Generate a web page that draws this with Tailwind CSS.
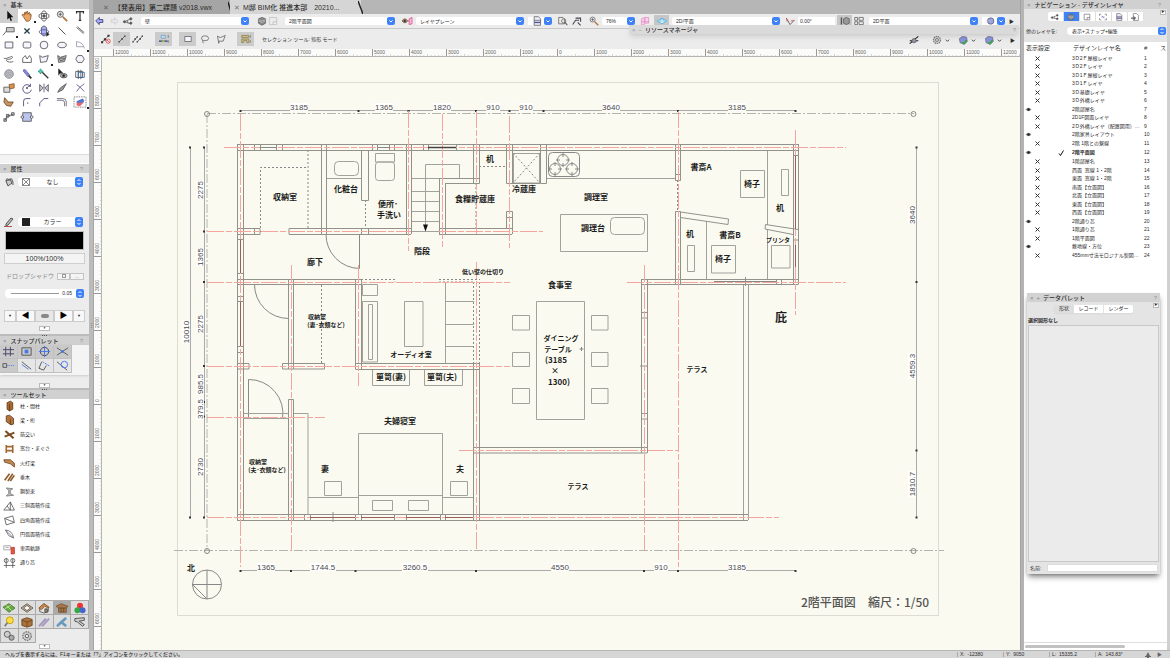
<!DOCTYPE html>
<html lang="ja">
<head>
<meta charset="utf-8">
<title>M邸 BIM化 推進本部</title>
<script src="https://cdn.jsdelivr.net/npm/@tailwindcss/browser@4"></script>
</head>
<body class="h-screen overflow-hidden flex flex-col bg-[#bdbdbd] text-[#2c2c2c] text-[5px] leading-none font-['Liberation_Sans','Noto_Sans_CJK_JP',sans-serif]">
<div class="flex-1 min-h-0 flex">

  <!-- left palettes -->
  <aside class="w-[89px] shrink-0 flex flex-col bg-[#ececec]">
    <section class="h-[164px] shrink-0 flex flex-col bg-white">
      <header data-title="基本"></header>
      <div id="tools" class="grid grid-cols-5"></div>
      <div class="mt-auto mb-px h-[9px] bg-[#f4f4f4] border-t border-[#dcdcdc]"></div>
    </section>
    <section class="h-[170px] shrink-0 flex flex-col">
      <header data-title="属性" data-help="1"></header>
      <div class="flex items-center h-[18px] pl-1 pr-[6px] gap-1">
        <svg class="w-[10px] h-[10px]" viewBox="0 0 10 10" fill="none" stroke="#555"><path d="M2 4l4-2 2 4-4 3zM6 2c2-1 3 1 3 6M2 4c0-3 3-3 3 0" fill="#ccc"/></svg>
        <label class="flex-1 flex items-center h-[10px] bg-white rounded-sm shadow-xs"><svg class="w-[8px] h-[8px] ml-1" viewBox="0 0 8 8" fill="none" stroke="#555" stroke-width=".7"><path d="M.5.5h7v7h-7zM.5.5l7 7M7.500.5l-7 7"/></svg><select aria-label="塗り" class="appearance-none flex-1 min-w-0 text-center text-[6px]"><option>なし</option></select><span data-stepper></span></label>
      </div>
      <div class="flex items-center h-[18px] pl-1 pr-[6px] gap-1 mt-[22px]">
        <svg class="w-[10px] h-[10px]" viewBox="0 0 10 10" fill="none" stroke="#555"><path d="M2 7l5-6 2 1-5 6-2 1z" fill="#bbb"/><path d="M0 9.500h8" stroke="#a55"/></svg>
        <label class="flex-1 flex items-center h-[10px] bg-white rounded-sm shadow-xs"><span class="w-[8px] h-[8px] ml-1 bg-[#222]"></span><select aria-label="ペン" class="appearance-none flex-1 min-w-0 text-center text-[6px]"><option>カラー</option></select><span data-stepper></span></label>
      </div>
      <button aria-label="線の色" class="mx-[5px] h-[19px] bg-black border border-[#bbb]"></button>
      <button class="mx-1 mt-[3px] h-[11px] bg-[#f4f4f4] border border-[#cfcfcf] text-[7px] leading-none">100%/100%</button>
      <div class="flex items-center h-[10px] mt-[7px] pl-[6px] pr-[5px] text-[#888] text-[6px]">
        <span class="flex-1 whitespace-nowrap">ドロップシャドウ</span>
        <button class="w-[13px] h-[7px] border border-[#c4c4c4] bg-[#f4f4f4] flex items-center justify-center"><span class="w-1 h-1 border border-[#999]"></span></button>
        <button class="w-[14px] h-[7px] border border-[#c4c4c4] bg-[#f4f4f4] text-[5px] leading-none">...</button>
      </div>
      <div class="flex items-center h-[9px] mx-[5px] mt-2 bg-white rounded-sm"><span class="h-px bg-[#999] flex-1 ml-[6px] mr-[3px]"></span><span class="pr-1 text-[5px]">0.05</span><span data-stepper></span></div>
      <div class="flex mx-1 mt-[12px] h-[12px]">
        <button class="w-[12px] border border-[#ccc] bg-[#f8f8f8] text-[4px]">▼</button>
        <button class="flex-1 border border-[#ccc] bg-[#f8f8f8] text-[8px] leading-none text-black">◀</button>
        <button aria-label="線種" class="flex-1 border border-[#ccc] bg-[#e8e8e8] flex items-center justify-center"><span class="w-[8px] h-1 rounded-xs bg-[#888]"></span></button>
        <button class="flex-1 border border-[#ccc] bg-[#f8f8f8] text-[8px] leading-none text-black">▶</button>
        <button class="w-[12px] border border-[#ccc] bg-[#f8f8f8] text-[4px]">▼</button>
      </div>
      <div data-fold class="mt-1"></div>
    </section>
    <div data-grip></div>
    <section class="h-[52px] shrink-0 flex flex-col">
      <header data-title="スナップパレット" data-help="1"></header>
      <div id="snaps" class="grid grid-cols-[repeat(4,18px)] pb-[2px] bg-[#f4f4f4] shadow-sm"></div>
      <div data-fold class="mt-auto"></div>
    </section>
    <div data-grip></div>
    <section class="flex-1 min-h-0 flex flex-col">
      <header data-title="ツールセット"></header>
      <div class="flex-1 bg-white"><div id="toolset" class="h-[171px] flex flex-col"></div></div>
      <div id="cats" class="grid grid-cols-5 border-t border-l border-[#aaa]"></div>
      <div data-fold class="h-[7px]"></div>
    </section>
  </aside>
  <div class="w-[5px] shrink-0 bg-[#bbb] border-r border-[#a6a6a6] flex items-center justify-center text-[#555] text-[5px]">⋮</div>

  <!-- document area -->
  <main class="relative flex-1 min-w-0 flex flex-col bg-[#ececec]">
    <nav class="h-[14px] shrink-0 flex bg-[#b6b6b6] text-[7px] font-medium" aria-label="書類">
      <button class="w-[136px] bg-[#a5a5a5] flex items-center gap-[5px] pl-[9px] whitespace-nowrap"><span class="text-[#666]">✕</span>【発表用】第二課題 v2018.vwx</button>
      <svg class="w-1 h-[14px] -mx-[2px]" viewBox="0 0 4 14"><path d="M0 2L3 12" stroke="#222" stroke-width="1.500"/></svg>
      <button class="w-[131px] bg-[#d5d5d5] flex items-center gap-[3px] pl-1 whitespace-nowrap"><span class="text-[#777]">✕</span>M邸 BIM化 推進本部　20210...</button>
      <svg class="w-[5px] h-[14px] -mx-[3px]" viewBox="0 0 5 14"><path d="M0 1L5 14" stroke="#222" stroke-width="1.500"/></svg>
    </nav>
    <div id="bar1" class="h-[15px] shrink-0 flex items-center bg-[#ececec] border-b border-[#c8c8c8]"></div>
    <div id="bar2" class="h-[20px] shrink-0 flex items-center bg-[#ececec]"></div>
    <div class="h-[8px] shrink-0 bg-[#fbfbf9] border-b border-[#b5b5b5] overflow-hidden"><svg id="hruler" class="w-full h-[8px]"></svg></div>
    <div class="flex-1 min-h-0 flex">
      <div class="w-[8px] shrink-0 bg-[#fbfbf9] border-r border-[#b5b5b5] overflow-hidden"><svg id="vruler" class="w-[8px] h-full"></svg></div>
      <div class="flex-1 min-w-0 bg-[#fafaf0] overflow-hidden">
      <svg class="w-full h-full" role="img" aria-label="2階平面図">
       <g transform="translate(-102 -57)">
        <rect x="177.500" y="82.500" width="761" height="533" fill="none" stroke="#dcdcd4"/>
        <g fill="none" stroke="#b4b4ae" stroke-dasharray="9 2 2 2"><path d="M207 114V551M207 113.500H914M174 550.500H944"/></g>
        <g fill="none" stroke="#888"><circle cx="207" cy="114" r="2.500"/><circle cx="207" cy="551" r="2.500"/><circle cx="913.500" cy="114" r="2.500"/><circle cx="913.500" cy="551" r="2.500"/></g>
        <!-- dimension lines -->
        <path d="M240.500 110.500H796M190.500 147V518M204.500 147V518M916.500 147V518M240 570.500H796" fill="none" stroke="#aaa"/>
        <g id="dots" fill="#333"></g>
        <g id="dims" class="text-[8px] font-['Liberation_Sans',sans-serif]" fill="#4a4a4a" text-anchor="middle"></g>
        <!-- furniture -->
        <g fill="none" stroke="#a2a29d">
         <path d="M326 178.500H361M546 178.500H676M375.500 153.500h19v8.500h-19zM513.500 153.500h26v29.500h-26zM560.500 214.500h87v37h-87zM740.500 170.500h24v27h-24zM767.500 150V225M767.500 230V279M781.500 169.500h7v26h-7zM706.500 221V279M687.500 245.500h7v26h-7zM711.500 245.500h24v27.500h-24zM771.500 245.500h18.500v22.500h-18.500z"/>
         <rect x="334.500" y="161.500" width="24" height="14" rx="4"/><rect x="375.500" y="162" width="19" height="18.500" rx="3"/><rect x="610.500" y="217.500" width="34" height="17" rx="4"/>
         <rect x="548.500" y="152.500" width="31" height="24" rx="4" stroke="#888"/>
         <g stroke="#888"><circle cx="563" cy="160" r="5.500"/><circle cx="555" cy="169" r="5.500"/><circle cx="572" cy="169" r="5.500"/><path d="M563 153v4M563 163v4M556 160h4M566 160h4M555 162v4M555 172v4M548 169h4M558 169h4M572 162v4M572 172v4M565 169h4M575 169h4"/></g>
         <path d="M411 178.500H440M411 191.500H440M411 201.500H440M411 211.500H440M411 221.500H440M425.500 226V164.500H459.500V178M411 231.500H440"/>
         <path d="M362.500 284.500h15v11h-15zM362.500 301.500h15v60.500h-15zM368.500 304.500h4v55h-4zM404.500 301.500h18.500v45h-18.500zM445.500 282V363M445.500 301.500H474M445.500 324.500H474M445.500 346.500H474M372.500 369V385.500H409.500V369M424.500 369V385.500H462.500V369"/>
         <path d="M358.500 433.500h84v81h-84zM358.500 495.500h84M372.500 500.500h20v10h-20zM408.500 500.500h20v10h-20zM324.500 481.500h17v14h-17zM450.500 481.500h17v14h-17zM308 497.500H358M443 497.500H474"/>
         <path d="M536.500 301.500h48v118h-48zM512.500 315.500h17v14.500h-17zM512.500 352.500h17v14h-17zM512.500 388.500h17v15h-17zM591.500 315.500h16.500v14.500h-16.500zM591.500 352.500h16.500v14h-16.500zM591.500 388.500h16.500v15h-16.500z"/>
         <path d="M326 234A34 34 0 0 0 359.500 268.500V234M254.500 284.500A34 34 0 0 0 288.500 318.500M248.500 419V379.500A34 34 0 0 1 282.500 419" stroke="#888"/>
         <path d="M243 413.500H289M293 413.500H308V514M243 418.500H289"/>
         <g stroke-dasharray="2 2" stroke="#888"><path d="M260.500 228V167.500H308M308 150V228M260 231.500H290M365.500 200V228M479 166.500H506M513 153L540 183M540 153L513 183M476 183V228M677.500 180V211M321.500 285V363M361 279.500H395V282M439 279.500H480M439 282H474M473.500 282V363M479.500 282V363"/></g>
         <path d="M743.500 285V520M748.500 285V520"/>
        </g>
        <path d="M423 224.500h5l-2.500 7z" fill="#111"/>
        <!-- walls -->
        <g fill="none" stroke="#92928d">
         <path d="M237.500 144.500H798.500M237.500 150.500H798.500M237.500 144V520M243.500 144V520M237 228.500H260V234.500H237M411 228.500H289V234.500H411M512 228.500H439.500M439 234.500H512M237 279.500H361M237 284.500H361M237 363.500H249V369H237M282.500 363.500H324.500V369H282.500zM355.500 363.500H479.500M355.500 369.500H479.500M237 514.500H748M237 520.500H748"/>
         <path d="M321.500 144V234M326.500 144V234M361.500 150V200.500H368.500V150M361.500 228V234M368.500 228V234M406.500 144V234M411.500 144V234M439.500 178.500V234M445.500 183.500V234M439 178.500H479.500V144M445 183.500H479.500V178M473.500 144V183M506.500 144V183.500H512.500V144M506.500 228V211.500H512.500V234M506.500 217.500h6M540.500 144V183.500H546.500V144M512 183.500H540"/>
         <path d="M675.500 144V180.500H680.500V144M675.500 174.500h5M675.500 284V211.500H680.500V284M793.500 144V284M798.500 144V284M641 279.500H798.500M641 284.500H798.500M641.500 279V453M647.500 279V453M473 447.500H647M473 453H647M473.500 363V520M479.500 363V520M288.500 279V369M293.500 279V369M288.500 514V399.500H293.500V520M355.500 279V369M361.500 279V369"/>
         <path d="M680.500 212L728.500 219 728 224.500 680.500 217.500M798 229.500L765.500 224.500 765 229 793 234.500M793 240h6M793 155.500h6M237 239.500h6M237 273.500h6M237 296.500h6M237 301.500h6M237 346.500h6M237 352.500h6M254.500 144v6M260.500 144v6M276.500 144v6M282.500 144v6M372.500 144v6M377.500 144v6M389.500 144v6M394.500 144v6M423.500 144v6M428.500 144v6M456.500 144v6M254.500 228v6M641 312.500h6M641 318h6M641 413.500h6M641 419h6M776.500 279v5M781.500 279v5"/>
         <path d="M310.500 514v6M304.500 514v6M355.500 514v6M361.500 514v6M394.500 514v6M406.500 514v6M440.500 514v6M445.500 514v6M288.500 514v6M293.500 514v6M333 512V522M745.500 277V286M640 366h8"/>
        </g>
        <circle cx="207" cy="584.500" r="14.500" fill="none" stroke="#888"/><path d="M192 584.500H221M207 570V599L193 585" fill="none" stroke="#888"/>
        <!-- grid axes -->
        <g fill="none" stroke="#f5a5a0" stroke-dasharray="17 2 6 2">
         <path d="M224 147.500H846M207 231.500H411M439 231.500H543M207 282.500H510M627 282.500H846M207 366.500H510M207 417.500H325M207 517.500H779M459 450.500H678"/>
         <path d="M240.500 114V567M291.500 265V551M358.500 265V386M408.500 111V251M442.500 114V248M476.500 111V234M476.500 262V551M509.500 116V248M644.500 265V551M678.500 111V567M795.500 130V315"/>
        </g>
        <path d="M240.500 240V273M240.500 302V346M795.500 156V229M795.500 245V267M310 517.500H355M361 517.500H394M406 517.500H440M445 517.500H473" stroke="#9a5d5a" fill="none"/>
        <path d="M428 147.500H456" stroke="#444" stroke-width="1.500"/><path d="M260 147.500H277M377 147.500H390M714 281.500H776M579.500 349h4M581.500 347v4" stroke="#888"/>
        <!-- room names -->
        <g id="rooms" fill="#1c1c1c" text-anchor="middle" class="font-bold font-['Noto_Sans_CJK_JP',sans-serif]"></g>
        <g fill="#555" class="text-[12px] font-medium font-['Noto_Sans_CJK_JP',sans-serif]"><text x="801" y="607">2階平面図</text><text x="868" y="607">縮尺：1/50</text></g>
       </g>
      </svg>
      </div>
    </div>
    <section class="absolute top-[25px] left-[535px] right-[1px] h-[9px] flex items-center gap-[3px] px-[3px] bg-[#dadada] shadow-md text-[6px] font-medium">
      <button class="text-[#999]">×</button><button class="text-[#999]">−</button><h2>リソースマネージャ</h2><button class="ml-auto text-[#999]">?</button>
    </section>
  </main>
  <div class="w-[4px] shrink-0 bg-[#b4b4b4] border-l border-[#a2a2a2]"></div>

  <!-- navigation palette -->
  <aside class="relative w-[146px] shrink-0 flex flex-col bg-[#e4e4e4] border-r-[3px] border-[#d0d0d0]">
    <header data-title="ナビゲーション - デザインレイヤ" data-help="1"></header>
    <div class="h-[15px] flex items-center justify-center"><div id="navtabs" class="flex h-[9px] bg-white rounded-xs overflow-hidden"></div></div>
    <label class="h-[14px] mb-1 flex items-center pl-[2px] pr-[1px] text-[5px]"><span class="w-[41px]">他のレイヤを:</span><span class="flex-1 flex h-[8px] bg-white rounded-sm"><select class="appearance-none flex-1 min-w-0 pl-[5px] text-[5px]"><option>表示+スナップ+編集</option></select><span data-stepper></span></span></label>
    <div class="flex-1 min-h-0 bg-white flex flex-col">
      <table class="w-full table-fixed h-[218px] border-collapse text-left">
        <colgroup><col class="w-[8px]"><col class="w-[20px]"><col class="w-[19px]"><col><col class="w-[16px]"><col class="w-[7px]"></colgroup>
        <thead><tr class="h-[12px] text-[6px]"><th colspan="3" class="font-normal pl-[2px] p-0">表示設定</th><th class="font-normal p-0 pl-[2px]">デザインレイヤ名</th><th class="font-normal p-0">#</th><th class="font-normal p-0">ス</th></tr></thead>
        <tbody id="layers"></tbody>
      </table>
      <div class="mt-auto h-[8px] border-t border-[#ddd] flex items-center"><div class="ml-px w-[100px] h-[3px] rounded-full bg-[#c2c2c2]"></div></div>
    </div>
    <section class="absolute left-[3px] top-[293px] w-[133px] h-[281px] flex flex-col bg-[#e4e4e4] shadow-md shadow-black/40">
      <h2 class="h-[9px] flex items-center gap-[3px] px-[3px] bg-[#d2d2d2] text-[6px] font-medium"><button class="text-[#888]">×</button><button class="text-[#888]">+</button>データパレット<button class="ml-auto text-[#999]">?</button></h2>
      <div class="h-[13px] flex items-center justify-center"><div class="flex h-[8px] rounded-xs bg-white text-[5px] shadow-xs"><button class="w-[20px] bg-[#dedede]">形状</button><button class="w-[30px] border-r border-[#e4e4e4]">レコード</button><button class="w-[29px]">レンダー</button></div></div>
      <p class="h-[10px] flex items-center pl-px font-bold">選択図形なし</p>
      <div class="flex-1 mx-px border border-[#c8c8c8] bg-[#ebebeb]"></div>
      <label class="h-[12px] flex items-center pl-[3px] pr-[2px] gap-[6px]">名前:<input class="flex-1 min-w-0 h-[8px] bg-white border border-[#ddd]"></label>
      <button class="absolute right-[1px] top-[10px] w-[6px] h-[5px] border border-[#bbb] bg-white text-[3px] leading-none">▶</button>
    </section>
    <button class="absolute right-[1px] top-[10px] w-[6px] h-[5px] border border-[#bbb] bg-white text-[3px] leading-none">▶</button>
  </aside>
</div>

<footer class="h-[8px] shrink-0 flex items-center bg-[#d6d6d6] border-t border-[#b5b5b5] pl-[5px] text-[5px] font-medium">
  <span class="flex-1">ヘルプを表示するには、F1キーまたは「?」アイコンをクリックしてください。</span>
  <output class="w-[46px] border-l border-[#aaa] pl-[2px]">X:&nbsp; -12380</output><output class="w-[46px] border-l border-[#aaa] pl-[2px]">Y:&nbsp; 9050</output><output class="w-[46px] border-l border-[#aaa] pl-[2px]">L:&nbsp; 15335.2</output><output class="w-[46px] border-l border-[#aaa] pl-[2px]">A:&nbsp; 143.83°</output>
  <span class="w-[29px] flex items-center gap-[6px] pl-1 text-[#666]"><svg class="w-[6px] h-[6px]" viewBox="0 0 6 6"><path d="M3 0L5 4H1zM0 4h6v1H0zM2 5h2v1H2z" fill="#666"/></svg>▶</span>
</footer>

<script>
const $ = id => document.getElementById(id);
document.querySelectorAll('[data-title]').forEach(h => {
  h.className = 'h-[9px] shrink-0 flex items-center gap-1 px-[3px] bg-[#d0d0d0] text-[6px] font-medium';
  h.innerHTML = `<button class="text-[#888]" aria-label="閉じる">×</button><h2>${h.dataset.title}</h2>` + (h.dataset.help ? '<button class="ml-auto mr-[3px] text-[#999]">?</button>' : '');
});
document.querySelectorAll('[data-stepper]').forEach(s => {
  s.className = 'w-[8px] h-full min-h-[8px] shrink-0 rounded-xs bg-[#3f82f7] flex items-center justify-center';
  s.innerHTML = '<svg class="w-[6px] h-[8px]" viewBox="0 0 6 8" fill="none" stroke="#fff"><path d="M1.500 3L3 1.500 4.500 3M1.500 5L3 6.500 4.500 5"/></svg>';
});
document.querySelectorAll('[data-fold]').forEach(s => {
  s.classList.add('flex', 'justify-center', 'items-center', 'shrink-0');
  s.innerHTML = '<button class="w-[11px] h-[5px] border border-[#bbb] bg-white text-[3px] leading-none flex items-center justify-center">▼</button>';
});
document.querySelectorAll('[data-grip]').forEach(s => {
  s.className = 'h-[2px] shrink-0 bg-[#bcbcbc] flex justify-center items-center gap-px';
  s.innerHTML = '<i class="w-px h-px bg-[#555]"></i><i class="w-px h-px bg-[#555]"></i><i class="w-px h-px bg-[#555]"></i>';
});

/* icon bodies, all drawn on a 16 x 14 box */
const I = {
  arrow: '<path d="M6 1v10l2.500-2 1.500 4 1.500-1-1.500-3.500H13z" fill="#111" stroke="none"/>',
  hand: '<path d="M4 8L2 6l1-1 2 1V3l1.500-.5V5L8 1.500 9 2v3l1.500-2 1 .5V6l1-1 .5 1-1 5-2 2H7z" fill="#e7a668" stroke="#8c5a2e"/>',
  orbit: '<ellipse cx="8" cy="7" rx="6" ry="3"/><ellipse cx="8" cy="7" rx="3" ry="6"/><circle cx="8" cy="7" r="1.500" fill="#555"/>',
  mag: '<circle cx="6" cy="5" r="3.500" fill="#eee"/><path d="M4 5h4M6 3v4"/><path d="M9 8l5 5" stroke="#b7773a" stroke-width="2"/>',
  text: '<path d="M4 4V2h8v2M8 2v10M6.500 12h3" stroke="#333" stroke-width="1.500"/>',
  label: '<path d="M1 12l4-5"/><path d="M5 3h9v5H5z" fill="#ccc"/>',
  x: '<path d="M5 4l6 6M11 4L5 10" stroke="#243d4c" stroke-width="1.500"/>',
  cubes: '<path d="M5 3l3-2 3 2v8l-3 2-3-2z" fill="#aab4f0"/><ellipse cx="8" cy="8" rx="5.500" ry="2.500" stroke="#55a"/><path d="M11 8v5l3-2z" fill="#111"/>',
  line: '<path d="M4 3l8 8" stroke="#333"/>',
  dline: '<path d="M4 3l8 7M5 2l8 7" stroke="#555"/>',
  rect: '<path d="M3.500 3.500h9v7h-9z" fill="#f5f5ff"/>',
  rrect: '<rect x="3.500" y="3.500" width="9" height="7" rx="2" fill="#f5f5ff"/>',
  circle: '<circle cx="8" cy="7" r="4.500" fill="#f5f5ff"/>',
  oval: '<ellipse cx="8" cy="7" rx="5" ry="3.200" fill="#f5f5ff"/>',
  arc: '<path d="M4 3q8 1 9 8M4 3v6h8" stroke="#99a"/>',
  free: '<path d="M2 6c3 2 10-4 10-1s-9 2-7 4 5 2 8 1"/>',
  pline: '<path d="M3 11V6l3-3 2 4 3-4 2 3v5z"/>',
  poly: '<path d="M3 3l3 2 7-2-2 7-7 1z" fill="#f2f2ff"/>',
  dpoly: '<path d="M3 3l3 2 7-2-2 7-7 1zM5 6l6 0-1 2-4 1z" fill="#bbb"/>',
  hex: '<path d="M5.500 3h5L13 7l-2.500 4h-5L3 7z" fill="#f5f5ff"/>',
  sphere: '<circle cx="8" cy="7" r="5" fill="#b9bbc8" stroke="#888"/><path d="M4 5h8M3 7h10M4 9h8" stroke="#999" stroke-width=".6"/>',
  dropper: '<path d="M4 2l2 0 5 6-2 2-5-6z" fill="#88d" stroke="#66a"/><path d="M10 9l3 3" stroke="#222" stroke-width="2"/>',
  wand: '<path d="M6 5l7 7" stroke="#333" stroke-width="1.500"/><path d="M4 1l1 2 2 1-2 1-1 2-1-2-2-1 2-1z" fill="#6cc" stroke="#297"/>',
  eye: '<path d="M4 1v7l2-2h3z" fill="#111"/><ellipse cx="10" cy="9" rx="4" ry="2.500" fill="#bbb"/><circle cx="10" cy="9" r="1.500" fill="#222"/>',
  group: '<path d="M3 4h8v7H3zM6 2v11M9 2v11" /><path d="M6 5h7v6H6z" stroke="#36a"/>',
  push: '<path d="M2 6h7v6H2z" fill="#ddd"/><path d="M8 3l6-1v5l-5 1z" fill="#d8944a" stroke="#8c5a2e"/>',
  rotate: '<path d="M12 5a5 5 0 1 0 1 4M12 2v3h-3" stroke="#447"/><circle cx="8" cy="7" r=".8" fill="#447"/>',
  mirror: '<path d="M3 3v8l4-4zM13 3v8L9 7zM8 2v10" fill="#ccd" stroke="#556"/>',
  knife: '<path d="M3 12l3-5 7-5-4 7z" fill="#999"/>',
  trim: '<path d="M4 11l4-5 5 5M4 3l4 3 5-4" stroke="#558"/>',
  reshape: '<path d="M3 2l4 5 6 0-3 5-5-1-3-4z" fill="#c99565" stroke="#6e4a2a"/>',
  fillet: '<path d="M4 12V6q0-3 3-3h5" stroke="#447"/><path d="M8 8h1v1"/>',
  chamfer: '<path d="M3 12V8l5-5h5" stroke="#447"/>',
  offset: '<path d="M2 3h7q4 0 4 4v5M2 5h6q3 0 3 3v4" stroke="#667"/>',
  eraser: '<path d="M1 1h14v12H1z" stroke-dasharray="1 1"/><path d="M4 8l4-2 4 2-4 4-4-1z" fill="#e66" stroke="none"/><path d="M4 6l7-3 2 2-1 3-8 0z" fill="#57c" stroke="none"/>',
  chain: '<path d="M3 11l3-5 7-2M2 9h3v3H2zM5 4h3v3H5zM11 2h3v3h-3z" fill="#ccd"/>',
  block: '<path d="M3 2h10v10H3z" fill="#bcc4f0"/><circle cx="2.500" cy="7" r="1.500" fill="#fff"/><circle cx="13.500" cy="7" r="1.500" fill="#fff"/>',
  grid: '<path d="M5 2v10M10 2v10M2 5h12M2 9.500h12" stroke="#446"/>',
  snapr: '<path d="M3 3h10v8H3z"/><path d="M6 5h4v4H6z" fill="#47e" stroke="none"/>',
  snapc: '<circle cx="8" cy="7" r="4.500" stroke="#446"/><path d="M8 1v12M2 7h12" stroke="#47e"/>',
  snapx: '<path d="M2 3l12 8M2 11l12-8"/><circle cx="8" cy="7" r="1" fill="#47e" stroke="#47e"/>',
  snapd: '<path d="M2 5h4v4H2z"/><path d="M7 7h7" stroke="#47e" stroke-dasharray="1 1"/>',
  snapl: '<path d="M3 3l10 8"/><path d="M3 6l7 5" stroke="#47e"/>',
  snapa: '<path d="M5 3l-3 7 5 2 3-5"/><path d="M6 3l8 5" stroke="#47e" stroke-dasharray="2 1"/>',
  snapt: '<path d="M2 3l11 9"/><circle cx="10" cy="6" r="3.500" stroke="#47e"/>',
  post: '<path d="M5 3l4-2 3 2v8l-4 2-3-2z" fill="#a5682f" stroke="#5f3a18"/><path d="M8 5v8" stroke="#5f3a18"/>',
  beam: '<path d="M4 2l4-1 5 4v7l-3 1-6-4z" fill="#b3753c" stroke="#5f3a18"/><path d="M9 6v7" stroke="#5f3a18"/>',
  brace: '<path d="M3 2l10 9M2 9l12-5" stroke="#7b4a20" stroke-width="2.500"/>',
  sill: '<path d="M4 2v10M12 2v10M4 4h8M4 9h8" stroke="#a06a35" stroke-width="2"/>',
  hiuchi: '<path d="M1 3l8 0 5 4v5L9 8 2 6z" fill="#c08850" stroke="#6d4722"/>',
  rafter: '<path d="M2 11l6-8M6 12l6-9M9 12l5-7" stroke="#8e5a2a" stroke-width="2"/>',
  steel: '<path d="M4 2l8 1-3 2v4l4 2-9 1 3-3V5z" fill="#bbb" stroke="#777"/>',
  tri: '<path d="M1 12L9 2l5 10zM9 2v10M5 7l4 5"/>',
  quad: '<path d="M2 5l10-3 2 8-10 3zM2 5l12 5"/>',
  bow: '<path d="M3 2q9 1 10 10zM3 2l4 7 6 3" stroke="#667"/>',
  car: '<path d="M1 3h8v5H1zM3 5h4" stroke="#999"/><path d="M10 5h4v8h-4z" fill="#e45a3c" stroke="#b33"/>',
  axes: '<circle cx="4" cy="4" r="2.500"/><circle cx="12" cy="4" r="2.500"/><path d="M4 1v12M12 1v12M1 10h14"/>',
  site: '<path d="M1 6l7-4 7 5-7 5z" fill="#6a4" stroke="#473"/><path d="M5 4l6 6M3 8l7-4" stroke="#cde6a0"/>',
  slab: '<path d="M1 7l7-5 7 5-7 5z" fill="#d9b98a"/><path d="M4 7l4-3 4 3-4 3z" fill="#fff"/>',
  house: '<path d="M3 6l5-4 5 4v5l-5 2-5-2z" fill="#e6e6e6"/><path d="M2 7l6-5 6 4-1 1-4-2-4 4z" fill="#c98b4f" stroke="#8c5a2e"/><path d="M9 8h3v4H9z" fill="#886"/>',
  frame: '<path d="M1 5l6-3 8 3-2 2v5H4V7z" fill="#a5784d" stroke="#7b5532"/><path d="M4 7h9M7 7v5M10 7v5" stroke="#6b4726"/>',
  rgb: '<circle cx="8" cy="4.500" r="3.500" fill="#e33" stroke="none"/><circle cx="5" cy="9.500" r="3.500" fill="#3a4" stroke="none"/><circle cx="11" cy="9.500" r="3.500" fill="#46c" stroke="none"/>',
  bulb: '<circle cx="9" cy="5" r="4" fill="#fd4" stroke="#b90"/><path d="M6 8l-3 4" stroke="#777" stroke-width="2"/>',
  table: '<path d="M2 4l6-2 6 2v7l-6 2-6-2z" fill="#a8723a" stroke="#6d4722"/><path d="M2 5l6 2 6-2M8 7v5" stroke="#6d4722"/>',
  pens: '<path d="M2 12l8-9M6 12l8-9" stroke="#99c" stroke-width="2"/><path d="M4 12l7-8" stroke="#c88"/>',
  pipe: '<path d="M3 11l9-8M7 7l5 4" stroke="#69b" stroke-width="3" stroke-linecap="round"/>',
  ibeam: '<path d="M2 3l11-1v3l-6 1 6 4-2 2-6-5-3-1z" fill="#ccc" stroke="#444"/>',
  gears: '<circle cx="6" cy="5" r="3.500" fill="#ccc"/><circle cx="11" cy="9" r="3" fill="#aaa"/>',
  gear: '<circle cx="8" cy="7" r="5" fill="#ccc" stroke="#777" stroke-dasharray="2 1" stroke-width="1.500"/><circle cx="8" cy="7" r="2" fill="#eee"/>',
  back: '<path d="M2 7l5-5v3h5v4H7v3z" fill="#aaf" stroke="#225"/>',
  fwd: '<path d="M14 7L9 2v3H4v4h5v3z" fill="#e6e6ee" stroke="#ccc"/>',
  share: '<path d="M3 8l9-4M3 8l9 3M7 6l1 4"/><circle cx="3" cy="8" r="1.500" fill="#555"/><circle cx="12" cy="4" r="1.500" fill="#555"/><circle cx="12" cy="10" r="1.500" fill="#555"/>',
  cube: '<path d="M3 4l5-2 5 2v6l-5 3-5-3z" fill="#888"/><path d="M3 5l5 2 5-2M3 7l5 2 5-2" stroke="#bbb"/>',
  note: '<path d="M3 2h10v10H3z" stroke="#bbb"/><path d="M8 12V8h5" stroke="#bbb"/>',
  navn: '<path d="M3 2h10v10H3z"/><path d="M8 12V8h5"/>',
  eyep: '<path d="M1 7q4-6 8 0-4 5-8 0z" fill="#b9946b" stroke="#654"/><circle cx="5" cy="7" r="1.500" fill="#222"/><path d="M9 7h3" stroke="#c33"/><path d="M11 4l4-2v9l-4 1z" fill="#f6b9df" stroke="#d48"/>',
  doc: '<path d="M4 1h6l3 3v9H4zM4 6h9" fill="#eef"/><path d="M4 9h9" stroke="#559" stroke-width="2"/>',
  docm: '<path d="M2 2h6l2 2v7H2z" fill="#eee"/><circle cx="9" cy="7" r="3"/><path d="M11 9l3 4" stroke-width="1.500"/>',
  zsel: '<path d="M2 12l4-6h5M6 3h7v5M9 9l4 4" stroke="#445" stroke-width="1.500"/>',
  pink: '<path d="M3 4l4-2v10l-4 1zM8 2h5v8H8zM3 8h10" fill="#fbd4ec" stroke="#e487c0"/>',
  plane: '<path d="M1 7l7-4 7 4-7 4zM4 8l4-5 4 5" stroke="#4ab0dc" fill="#c4e5f3"/>',
  angle: '<path d="M8 12L3 3M8 12l6-6" stroke="#333"/><path d="M3 3l1 5M14 6l-5 1" stroke="#c44"/>',
  cubea: '<path d="M3 2v10" stroke-width="2"/><path d="M6 4l4-2 4 2v6l-4 2-4-2z" fill="#999"/>',
  panes: '<path d="M2 2h4v4H2zM2 8h4v4H2zM8 2h6v4H8zM8 8h6v4H8z"/>',
  ball: '<circle cx="9" cy="7" r="4.500" fill="#9aa4e0" stroke="#557"/><path d="M3 7h6" stroke="#bbb"/>',
  nosel: '<path d="M2 12L12 2" stroke="#444"/><path d="M1 10h3v3H1zM5 6h3v3H5zM10 1h3v3h-3z" fill="#333" stroke="none"/><circle cx="11" cy="10" r="3" stroke="#d33"/><path d="M9 8l4 4" stroke="#d33"/>',
  sel1: '<path d="M4 11l8-8" stroke="#444"/><path d="M7 6h2v2H7zM3 10h2v2H3zM11 2h2v2h-2z" fill="#333" stroke="none"/>',
  sel2: '<path d="M1 11l6-7M7 11l7-8" stroke="#444"/><path d="M3 6h2v2H3zM0 10h2v2H0zM6 3h2v2H6zM10 6h2v2h-2zM6 10h2v2H6zM13 2h2v2h-2z" fill="#333" stroke="none"/>',
  move: '<path d="M4 2h6v4H4z" fill="#bde" stroke="#79c"/><path d="M1 10h12" stroke="#358" stroke-width="2"/><path d="M5 10h4" stroke="#cb4" stroke-width="2"/><path d="M14 2v3M14 9v3"/>',
  lasso: '<ellipse cx="8" cy="6" rx="5" ry="3.500"/><path d="M5 9q-1 2 1 4"/>',
  plas: '<path d="M3 3l4 2 7-3-3 8-6 0v3z"/>',
  desk: '<path d="M2 2h10v3H2zM2 7h10v5H9V9H5v3H2z" fill="#cdbb80" stroke="#8a7a45"/><path d="M14 2v3M14 9v3"/>',
  snap: '<path d="M2 12L14 2M2 8h12" stroke="#222" stroke-width="1.500"/><circle cx="8" cy="8" r="3" fill="#99a"/>',
  ballc: '<path d="M3 5l4-3 6 1 1 6-4 4-6-2z" fill="#8d93dd" stroke="#668"/><path d="M7 10l2 2 4-5" stroke="#3a3" stroke-width="2"/>',
  scan: '<path d="M2 5V2h3M11 2h3v3M14 9v3h-3M5 12H2V9"/><path d="M5 7h6M6 5l4 4" stroke="#66a"/>',
  docl: '<path d="M5 1h6l3 3v9H5z"/><path d="M1 9h7M6 6l3 3-3 3" stroke="#222" stroke-width="1.500"/>'
};
const svg = (n, c = 'w-[14px] h-[12px]') => `<svg class="${c} shrink-0" viewBox="0 0 16 14" fill="none" stroke="#555" stroke-width="1" aria-hidden="true">${I[n]}</svg>`;

$('tools').innerHTML = 'arrow hand orbit mag text label x cubes line dline rect rrect circle oval arc free pline poly dpoly hex sphere dropper wand eye group push rotate mirror knife trim reshape fillet chamfer offset eraser chain block'.split(' ')
  .map((n, i) => `<button aria-label="${n}" class="relative flex items-center justify-center ${i ? '' : 'bg-[#cfcfcf]'} ${(i / 5 | 0) % 3 === 1 ? 'h-[15px]' : 'h-[14px]'}">${svg(n)}${[1, 5, 14, 17, 34].includes(i) ? '<i class="absolute right-0 bottom-0 w-[2px] h-[2px] bg-[#222]"></i>' : ''}</button>`).join('');
$('snaps').innerHTML = 'grid snapr snapc snapx snapd snapl snapa snapt'.split(' ')
  .map((n, i) => `<button aria-label="${n}" class="h-[14px] flex items-center justify-center border-r border-b border-[#c0c0c0] ${i < 5 ? 'bg-[#c9c9c9]' : 'bg-[#e6e6e6]'}">${svg(n, 'w-[15px] h-[13px]')}</button>`).join('');
$('toolset').innerHTML = [['post', '柱・間柱'], ['beam', '梁・桁'], ['brace', '筋交い'], ['sill', '窓台・まぐさ'], ['hiuchi', '火打梁'], ['rafter', '垂木'], ['steel', '鋼製束'], ['tri', '三斜面積作成'], ['quad', '四角面積作成'], ['bow', '円弧面積作成'], ['car', '車両軌跡'], ['axes', '通り芯']]
  .map(([n, t]) => `<button class="flex-1 flex items-center gap-[4px] pl-[3px] text-left">${svg(n, 'w-[13px] h-[12px]')}${t}</button>`).join('');
$('cats').innerHTML = 'site slab house frame rgb bulb table pens pipe ibeam gears gear'.split(' ')
  .map((n, i) => `<button aria-label="${n}" class="h-[14px] flex items-center justify-center border-r border-b border-[#aaa] ${i === 3 ? 'bg-[#aaa]' : 'bg-[#dedede]'}">${svg(n)}</button>`).join('');
$('navtabs').innerHTML = 'share cube navn scan doc docl'.split(' ')
  .map((n, i) => `<button aria-label="${n}" class="w-[16px] flex items-center justify-center border-r border-[#ddd] ${i === 1 ? 'bg-[#3f82f7]' : ''}">${svg(n, 'w-[10px] h-[8px]')}</button>`).join('');

const tri = '<span class="w-[8px] h-[8px] shrink-0 rounded-xs bg-[#3f82f7] flex items-center justify-center"><svg class="w-[6px] h-[6px]" viewBox="0 0 6 6" fill="none" stroke="#fff"><path d="M1.500 2.500L3 4 4.500 2.500"/></svg></span>';
const sel = (t, w) => `<label class="${w} h-[8px] shrink-0 flex bg-white rounded-xs"><select aria-label="${t}" class="appearance-none flex-1 min-w-0 pl-1 text-[5px]"><option>${t}</option></select>${tri}</label>`;
const btn = (n, c) => `<button aria-label="${n}" class="${c} shrink-0 flex items-center justify-center">${svg(n, 'w-[12px] h-[10px]')}</button>`;
$('bar1').innerHTML = btn('back', 'w-[12px]') + btn('fwd', 'w-[14px] ml-px') + btn('share', 'w-[14px]') + sel('壁', 'w-[108px] ml-[6px]') + btn('cube', 'w-[12px] ml-[7px]') + btn('note', 'w-[10px]')
  + sel('2階平面図', 'w-[110px] ml-[7px]') + btn('eyep', 'w-[14px] ml-[5px]') + sel('レイヤプレーン', 'w-[108px] ml-[2px]')
  + `<span class="w-[24px] h-[8px] ml-1 flex items-center justify-end bg-white">${btn('doc', 'w-[14px]')}${tri}</span>` + btn('docm', 'w-[14px] ml-1') + btn('zsel', 'w-[14px]') + btn('mag', 'w-[12px] ml-1') + sel('76%', 'w-[33px] ml-[2px]')
  + btn('pink', 'w-[12px] ml-1') + btn('plane', 'w-[15px] h-[12px] ml-[3px] bg-[#c6c6c6]') + sel('2D/平面', 'w-[108px] ml-[3px]') + btn('angle', 'w-[12px] ml-1') + '<input aria-label="角度" value="0.00°" class="w-[37px] h-[8px] ml-[2px] pl-[2px] bg-white text-[5px]">'
  + btn('cubea', 'w-[15px] h-[12px] ml-[2px] bg-[#c6c6c6]') + btn('panes', 'w-[12px] ml-px') + sel('2D平面', 'w-[109px] ml-1') + `<span class="w-[23px] h-[8px] ml-1 flex items-center justify-end bg-white">${btn('ball', 'w-[14px]')}${tri}</span><button class="ml-1 text-[5px] leading-none">▶</button>`;
const act = ' h-[14px] bg-[#cbcbcb]';
const chev = '<svg class="w-[5px] h-[5px] shrink-0" viewBox="0 0 6 6" fill="none" stroke="#333"><path d="M1 2l2 2 2-2"/></svg>';
$('bar2').innerHTML = btn('nosel', 'w-[15px] ml-1') + btn('sel1', 'w-[17px]' + act) + btn('sel2', 'w-[16px]') + btn('move', 'w-[17px] ml-[9px]' + act) + btn('rect', 'w-[17px] ml-[7px]' + act) + btn('lasso', 'w-[17px]') + btn('plas', 'w-[16px]')
  + btn('desk', 'w-[17px] ml-[8px]' + act) + '<span class="ml-[8px]">セレクション ツール: 矩形 モード</span>'
  + `<span class="ml-auto flex items-center gap-px pt-[2px]">${btn('snap', 'w-[14px] mr-[8px]')}${btn('gear', 'w-[14px]')}${chev}${btn('ballc', 'w-[14px] ml-[5px]')}${chev}${btn('ballc', 'w-[14px] ml-[5px]')}${chev}<button class="ml-[7px] mr-[5px] text-[5px] leading-none">▶</button></span>`;

/* rulers: 37 px per 1000 mm */
let h = '', v = '';
for (let i = -12; i <= 12; i++) {
  const x = 463 + i * 37;
  h += `<path d="M${x + .5} 0v8" stroke="#999"/><text x="${x + 2}" y="5" fill="#666" class="text-[5px]">${Math.abs(i) * 1000}</text>`;
  for (let k = 1; k < 10; k++) h += `<path d="M${x + k * 3.7} ${k === 5 ? 5 : 6}v3" stroke="#bbb" stroke-width=".6"/>`;
}
for (let i = -9; i <= 6; i++) {
  const y = 347 + i * 37;
  v += `<path d="M0 ${y + .5}h8" stroke="#999"/><text transform="translate(5 ${y - 2}) rotate(-90)" fill="#666" class="text-[5px]">${Math.abs(i) * 1000}</text>`;
  for (let k = 1; k < 10; k++) v += `<path d="M6 ${y + k * 3.7}h2" stroke="#bbb" stroke-width=".6"/>`;
}
$('hruler').innerHTML = h; $('vruler').innerHTML = v;

/* dimensions: value, x, y, vertical */
$('dims').innerHTML = [['3185', 299, 107], ['1365', 384, 107], ['1820', 442, 107], ['910', 493, 107], ['910', 526, 107], ['3640', 611, 107], ['3185', 737, 107],
  ['1365', 266, 567], ['1744.5', 323, 567], ['3260.5', 415, 567], ['4550', 560, 567], ['910', 661, 567], ['3185', 737, 567],
  ['2275', 200, 190, 1], ['1365', 200, 257, 1], ['2275', 200, 324, 1], ['985.5', 200, 384, 1], ['379.5', 200, 409, 1], ['2730', 200, 467, 1], ['10010', 186, 332, 1],
  ['3640', 912, 215, 1], ['4559.3', 912, 366, 1], ['1810.7', 912, 484, 1]]
  .map(([t, x, y, r]) => { const w = t.length * 4 + 2; return `<g transform="translate(${x} ${y})${r ? ' rotate(-90)' : ''}"><rect x="${-w / 2}" y="-4" width="${w}" height="8" fill="#fff"/><text y="3">${t}</text></g>`; }).join('');
const dot = (x, y) => `<rect x="${x - 1}" y="${y - 1}" width="2" height="2"/>`;
$('dots').innerHTML = [240.5, 358.5, 408.5, 476, 509.5, 543.5, 678, 795.5].map(x => dot(x, 111)).join('') + [240.5, 291, 355.5, 476, 644, 678, 795.5].map(x => dot(x, 571)).join('')
  + [147.5, 231.5, 282, 366, 402, 416.5, 517.5].map(y => dot(204, y)).join('') + [147.5, 517.5].map(y => dot(190, y)).join('') + [147.5, 282, 450.5, 517.5].map(y => dot(916.5, y)).join('');

const S = { 6: 'text-[6px]', 7: 'text-[7px]', 8: 'text-[8px]', 12: 'text-[12px]' };
$('rooms').innerHTML = [['収納室', 285, 197, 8], ['化粧台', 346, 189, 8], ['便所･', 388, 204, 8], ['手洗い', 389, 215, 8], ['机', 490, 159, 8], ['食糧貯蔵庫', 475, 199, 8], ['冷蔵庫', 524, 189, 8], ['調理室', 596, 197, 8], ['調理台', 593, 228, 8],
  ['書斎A', 701, 167, 8], ['椅子', 752, 184, 8], ['机', 780, 208, 8], ['机', 690, 234, 8], ['書斎B', 730, 235, 8], ['椅子', 723, 259, 8], ['プリンタ', 778, 240, 6], ['階段', 422, 251, 8], ['廊下', 315, 262, 8], ['低い壁の仕切り', 483, 272, 6], ['食事室', 560, 285, 8],
  ['収納室', 317, 317, 6], ['(妻･衣類など)', 326, 325, 6], ['オーディオ室', 411, 354, 7], ['箪笥(妻)', 391, 377, 8], ['箪笥(夫)', 442, 377, 8], ['夫婦寝室', 400, 421, 8], ['収納室', 258, 462, 6], ['(夫･衣類など)', 267, 470, 6], ['妻', 325, 469, 8], ['夫', 460, 469, 8],
  ['ダイニング', 561, 338, 7], ['テーブル', 558, 349, 7], ['(3185', 556, 360, 8], ['×', 555, 371, 8], ['1300)', 559, 382, 8], ['テラス', 697, 369, 7], ['テラス', 578, 486, 7], ['庇', 781, 318, 12], ['北', 191, 568, 8]]
  .map(([t, x, y, s]) => `<text x="${x}" y="${y + Math.round(s * .37)}" class="${S[s]}">${t}</text>`).join('');

/* layer list: name, visible */
$('layers').innerHTML = [['3Ｄ2Ｆ屋根レイヤ'], ['3Ｄ2Ｆレイヤ'], ['3Ｄ1Ｆ屋根レイヤ'], ['3Ｄ1Ｆレイヤ'], ['3Ｄ基礎レイヤ'], ['3Ｄ外構レイヤ'], ['2階部屋名', 1], ['2D1F図面レイヤ'], ['2Ｄ外構レイヤ（配置図用）…'], ['2階家具レイアウト', 1], ['2階 1階との繋線'], ['2階平面図', 1], ['1階部屋名'], ['西面&nbsp; 窓線 1・2階'], ['東面&nbsp; 窓線 1・2階'], ['南面【立面図】'], ['北面【立面図】'], ['東面【立面図】'], ['西面【立面図】'], ['2階通り芯', 1], ['1階通り芯'], ['1階平面図'], ['敷地線・方位', 1], ['455mm寸法モロジナル製図…']]
  .map(([t, on], i) => `<tr class="text-[5px] leading-none"><td class="p-0 pl-px">${on ? '<svg class="block w-[7px] h-[5px]" viewBox="0 0 7 6"><path d="M0 3Q3.500-1 7 3 3.500 7 0 3z" fill="#888"/><circle cx="3.500" cy="3" r="1.500" fill="#222"/></svg>' : ''}</td><td class="p-0 pl-[3px]">${on ? '' : '<svg class="block w-[5px] h-[5px]" viewBox="0 0 5 5"><path d="M.5.5l4 4M4.500.5l-4 4" stroke="#333"/></svg>'}</td><td class="p-0 pl-[6px]">${i === 11 ? '<svg class="block w-[6px] h-[6px]" role="img" aria-label="アクティブ" viewBox="0 0 6 6" fill="none"><path d="M1 3.500l1.500 2L5.500.5" stroke="#111"/></svg>' : ''}</td><td class="p-0 pl-px whitespace-nowrap overflow-hidden ${i === 11 ? 'font-bold' : ''}">${t}</td><td class="p-0">${i + 1}</td><td class="p-0"></td></tr>`).join('');
</script>
</body>
</html>
